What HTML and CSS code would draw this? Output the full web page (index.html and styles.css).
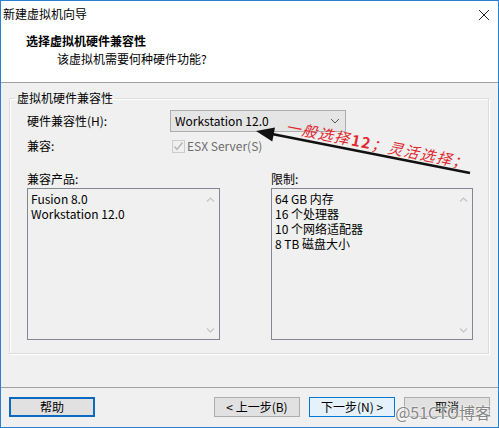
FILE: index.html
```html
<!DOCTYPE html>
<html lang="zh-CN">
<head>
    <meta charset="UTF-8">
    <title>新建虚拟机向导</title>
    <link rel="stylesheet" href="styles.css">
</head>
<body>
    <div class="window">
        <div class="titlebar">
            <span class="title">新建虚拟机向导</span>
            <svg class="close" width="12" height="12" viewBox="0 0 12 12">
                <path d="M1 1 L11 11 M11 1 L1 11" stroke="#222" stroke-width="1" fill="none"/>
            </svg>
        </div>

        <div class="header">
            <div class="header-title">选择虚拟机硬件兼容性</div>
            <div class="header-sub">该虚拟机需要何种硬件功能?</div>
        </div>

        <div class="main">
            <fieldset class="group">
                <legend>虚拟机硬件兼容性</legend>

                <div class="form-row">
                    <span class="form-label">硬件兼容性(H):</span>
                    <div class="combo">
                        <span>Workstation 12.0</span>
                        <svg width="10" height="6" viewBox="0 0 10 6">
                            <polyline points="1,1 5,5 9,1" stroke="#555" stroke-width="1" fill="none"/>
                        </svg>
                    </div>
                </div>

                <div class="form-row check-row">
                    <span class="form-label">兼容:</span>
                    <span class="checkbox">
                        <svg width="11" height="11" viewBox="0 0 11 11">
                            <polyline points="1.5,5.5 4,8.5 9.5,1.5" stroke="#b5b5b5" stroke-width="1.4" fill="none"/>
                        </svg>
                    </span>
                    <span class="check-text">ESX Server(S)</span>
                </div>

                <div class="lists">
                    <div class="list-col list-left">
                        <div class="list-label">兼容产品:</div>
                        <div class="listbox">
                            <div class="list-items">
                                <div>Fusion 8.0</div>
                                <div>Workstation 12.0</div>
                            </div>
                            <div class="scroll">
                                <svg width="9" height="5" viewBox="0 0 9 5"><polyline points="1,4.5 4.5,1 8,4.5" stroke="#c4c4c4" stroke-width="1.2" fill="none"/></svg>
                                <svg width="9" height="5" viewBox="0 0 9 5"><polyline points="1,0.5 4.5,4 8,0.5" stroke="#c4c4c4" stroke-width="1.2" fill="none"/></svg>
                            </div>
                        </div>
                    </div>
                    <div class="list-col list-right">
                        <div class="list-label">限制:</div>
                        <div class="listbox">
                            <div class="list-items">
                                <div>64 GB 内存</div>
                                <div>16 个处理器</div>
                                <div>10 个网络适配器</div>
                                <div>8 TB 磁盘大小</div>
                            </div>
                            <div class="scroll">
                                <svg width="9" height="5" viewBox="0 0 9 5"><polyline points="1,4.5 4.5,1 8,4.5" stroke="#c4c4c4" stroke-width="1.2" fill="none"/></svg>
                                <svg width="9" height="5" viewBox="0 0 9 5"><polyline points="1,0.5 4.5,4 8,0.5" stroke="#c4c4c4" stroke-width="1.2" fill="none"/></svg>
                            </div>
                        </div>
                    </div>
                </div>
            </fieldset>
        </div>

        <div class="footer">
            <button class="btn btn-help">帮助</button>
            <div class="nav-buttons">
                <button class="btn">&lt; 上一步(B)</button>
                <button class="btn btn-next">下一步(N) &gt;</button>
                <button class="btn">取消</button>
            </div>
        </div>

        <!-- annotation drawn on the screenshot -->
        <svg class="arrow" width="499" height="428" viewBox="0 0 499 428">
            <line x1="470" y1="173" x2="272" y2="134" stroke="#111" stroke-width="2.5"/>
            <polygon points="256,131 275,127.6 272.3,141.4" fill="#111"/>
        </svg>
        <div class="note">一般选择<b>12</b>；灵活选择；</div>
        <div class="watermark">@51CTO博客</div>
    </div>
</body>
</html>
```

FILE: styles.css
```css
* {
    box-sizing: border-box;
}

body {
    margin: 0;
    padding: 0;
    background-color: #fff;
    font-family: "Noto Sans CJK SC", "Open Sans", sans-serif;
    font-size: 12px;
    color: #000;
}

.window {
    position: relative;
    width: 499px;
    height: 428px;
    border: 1px solid #2b7fd0;
    background-color: #f0f0f0;
    display: flex;
    flex-direction: column;
    overflow: hidden;
}

.titlebar {
    height: 26px;
    background-color: #fff;
    display: flex;
    align-items: center;
    justify-content: space-between;
    padding: 0 8px 0 2px;
    line-height: 16px;
}

.close {
    display: block;
    margin-top: 1px;
}

.header {
    height: 56px;
    background-color: #fff;
    border-bottom: 1px solid #a0a0a0;
    padding: 6px 0 0 25px;
    line-height: 16px;
}

.header-title {
    font-weight: bold;
}

.header-sub {
    margin-top: 2px;
    padding-left: 31px;
}

.main {
    flex: 1;
    padding: 7px 9px 0 8px;
}

.group {
    margin: 0;
    padding: 4px 0 13px 17px;
    border: 1px solid #dcdcdc;
    box-shadow: inset 1px 1px 0 #fff, 1px 1px 0 #fff;
    line-height: 16px;
}

.group legend {
    margin-left: -12px;
    padding: 0 2px;
}

.form-row {
    display: flex;
    align-items: center;
}

.form-label {
    width: 143px;
}

.combo {
    width: 176px;
    height: 22px;
    background-color: #e5e5e5;
    border: 1px solid #adadad;
    display: flex;
    align-items: center;
    justify-content: space-between;
    padding: 0 5px 0 4px;
}

.combo svg {
    display: block;
}

.check-row {
    margin-top: 6px;
}

.checkbox {
    width: 13px;
    height: 13px;
    margin-left: 2px;
    border: 1px solid #cccccc;
    background-color: #f0f0f0;
    display: flex;
    align-items: center;
    justify-content: center;
}

.checkbox svg {
    display: block;
}

.check-text {
    margin-left: 2px;
    color: #6d6d6d;
}

.lists {
    display: flex;
    gap: 51px;
    margin-top: 17px;
}

.list-left {
    width: 193px;
}

.list-right {
    width: 202px;
}

.list-label {
    height: 17px;
}

.listbox {
    height: 152px;
    border: 1px solid #828790;
    background-color: #f0f0f0;
    display: flex;
}

.list-items {
    flex: 1;
    padding: 2px 0 0 3px;
    line-height: 15px;
}

.scroll {
    width: 17px;
    display: flex;
    flex-direction: column;
    justify-content: space-between;
    align-items: center;
    padding: 8px 0 6px;
}

.scroll svg {
    display: block;
}

.footer {
    height: 40px;
    border-top: 1px solid #a0a0a0;
    display: flex;
    justify-content: space-between;
    padding: 9px 8px 0 8px;
}

.nav-buttons {
    display: flex;
    gap: 9px;
}

.btn {
    width: 86px;
    height: 20px;
    margin: 0;
    padding: 0;
    background-color: #e1e1e1;
    border: 1px solid #adadad;
    font-family: inherit;
    font-size: 12px;
    line-height: 16px;
    color: #000;
}

.btn-help {
    border: 2px solid #0a6ac2;
}

.btn-next {
    background-color: #e5f1fb;
    border-color: #0078d7;
}

.arrow {
    position: absolute;
    left: -1px;
    top: -1px;
    pointer-events: none;
}

.note {
    position: absolute;
    left: 285px;
    top: 116px;
    transform: rotate(11.5deg);
    transform-origin: left center;
    font-size: 15px;
    line-height: 18px;
    letter-spacing: 1.5px;
    font-style: italic;
    color: #e0282e;
    white-space: nowrap;
}

.note b {
    font-style: normal;
    margin-left: 1px;
}

.watermark {
    position: absolute;
    right: 7px;
    bottom: 6px;
    font-size: 16px;
    line-height: 18px;
    color: #858585;
    text-shadow: 0 0 2px #fff, 0 0 2px #fff;
}
```
